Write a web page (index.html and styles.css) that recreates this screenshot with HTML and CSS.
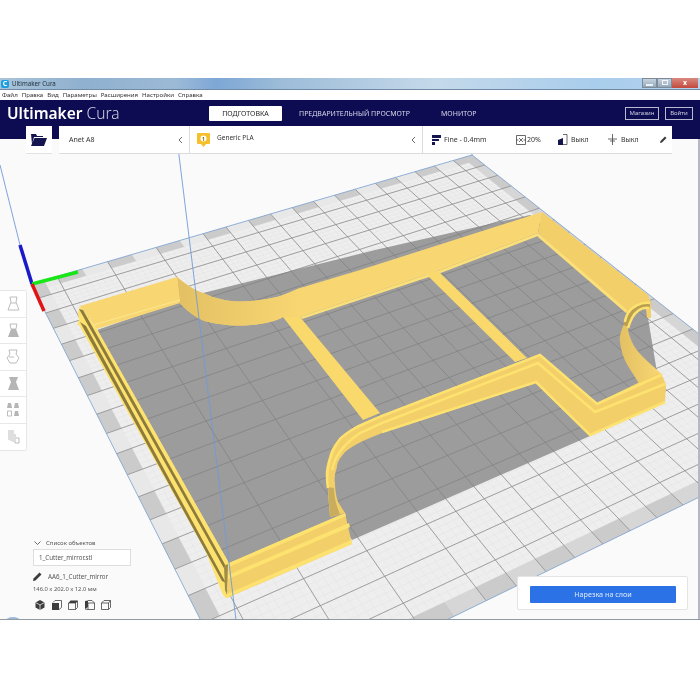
FILE: index.html
```html
<!DOCTYPE html>
<html lang="ru">
<head>
<meta charset="utf-8">
<title>Ultimaker Cura</title>
<link rel="stylesheet" href="styles.css">
</head>
<body>
<div class="window">
  <div class="titlebar">
    <span class="app-icon">C</span>
    <span class="title-text">Ultimaker Cura</span>
    <div class="caption">
      <span class="cap-btn"><i class="cap-min"></i></span>
      <span class="cap-btn"><i class="cap-max"></i></span>
      <span class="cap-close">x</span>
    </div>
  </div>
  <nav class="menubar">
    <span>Файл</span><span>Правка</span><span>Вид</span><span>Параметры</span><span>Расширения</span><span>Настройки</span><span>Справка</span>
  </nav>
  <header class="appbar">
    <div class="logo"><b>Ultimaker</b> <span>Cura</span></div>
    <div class="tabs">
      <span class="tab tab-on">ПОДГОТОВКА</span>
      <span class="tab tab-long">ПРЕДВАРИТЕЛЬНЫЙ ПРОСМОТР</span>
      <span class="tab">МОНИТОР</span>
    </div>
    <div class="account">
      <span class="acc-btn acc-shop">Магазин</span>
      <span class="acc-btn acc-login">Войти</span>
    </div>
    <div class="stagebar">
      <div class="open-btn">
        <svg width="16" height="12" viewBox="0 0 16 12"><path class="ic-navy" d="M0 0h5l1 2h6v1H3L1 10zM3.500 4H16l-3 8H0z"/></svg>
      </div>
      <div class="config">
        <div class="cfg cfg-printer"><span>Anet A8</span><svg class="chev" width="5" height="8" viewBox="0 0 5 8"><path class="ic-line" d="M4 1L1 4l3 3"/></svg></div>
        <div class="cfg cfg-material">
          <svg width="13" height="14" viewBox="0 0 13 14"><path class="ic-amber" d="M1 0h11a1 1 0 0 1 1 1v9a1 1 0 0 1-1 1H9l-2.500 3L4 11H1a1 1 0 0 1-1-1V1a1 1 0 0 1 1-1z"/><circle class="ic-white" cx="6.500" cy="5.500" r="3"/><text class="badge-num" x="6.500" y="7.500">1</text></svg>
          <span class="mat-name">Generic PLA</span>
          <svg class="chev" width="5" height="8" viewBox="0 0 5 8"><path class="ic-line" d="M4 1L1 4l3 3"/></svg>
        </div>
        <div class="cfg cfg-print">
          <span class="item item-fine"><svg width="9" height="10" viewBox="0 0 9 10"><path class="ic-navy" d="M0 0h9v3H0zM0 4h7v2H0zM0 7h3v3H0z"/></svg>Fine - 0.4mm</span>
          <span class="item item-infill"><svg width="10" height="10" viewBox="0 0 10 10"><path class="ic-line" d="M.5.5h9v9h-9zM3 3l4 4M7 3L3 7M.5 5h2M7.500 5h2"/></svg>20%</span>
          <span class="item item-sup"><svg width="10" height="11" viewBox="0 0 10 11"><path class="ic-navy" d="M0 11V6l5-2v7z"/><path class="ic-line" d="M5 .5h4v10H5"/></svg>Выкл</span>
          <span class="item item-adh"><svg width="9" height="11" viewBox="0 0 9 11"><path class="ic-line" d="M4.500 0v11M0 5h9M2 7h5"/></svg>Выкл</span>
          <svg class="pencil" width="7" height="7" viewBox="0 0 7 7"><path class="ic-dark" d="M0 7l.5-2L5 .5 6.500 2 2 6.500z"/></svg>
        </div>
      </div>
    </div>
  </header>
  <main class="stage">
    <svg class="scene" id="scene" width="698" height="481" viewBox="0 139 698 481">
      <defs>
        <linearGradient id="arcfade" gradientUnits="userSpaceOnUse" x1="177" y1="0" x2="300" y2="0">
          <stop offset="0" class="stop-a"/>
          <stop offset="1" class="stop-b"/>
        </linearGradient>
        <linearGradient id="arcright" gradientUnits="userSpaceOnUse" x1="620" y1="0" x2="660" y2="0">
          <stop offset="0" class="stop-a"/>
          <stop offset="1" class="stop-b"/>
        </linearGradient>
      </defs>
      <g id="plate"></g>
      <path class="floor" d="M97 330L203 293L375 250L530 215L645 300L657 372L663 380L590 436L352 540L345 530L240 575L228 562Z"/>
      <g id="floorgrid"></g>

      <!-- back wall with the curved corner -->
      <path class="wall-top" d="M177 277C185 284 194 290 203 293C222 302 240 303 260 300C280 298 290 292 300 288L360 270L542 212L538 233L438 271L300 317L283 317C272 324 245 327 227 325C212 323 205 322 198 318C190 313 184 308 180 303Z"/>
      <path class="arc-face" d="M177 277C185 284 194 290 203 293C222 302 240 303 260 300C280 298 290 292 300 288L300 317L283 317C272 324 245 327 227 325C212 323 205 322 198 318C190 313 184 308 180 303Z"/>
      <path class="wall-light" d="M300 317L438 271L538 233L538 236L438 274L302 319Z"/>

      <!-- cross bars -->
      <path class="bar" d="M283 317L300 317L380 413L363 420Z"/>
      <path class="bar" d="M426 274L438 271L527 358L515 362Z"/>

      <!-- left block and stepped left wall -->
      <path class="wall-top" d="M80 306L177 277L180 303L97 329Z"/>
      <path class="ridge-thin" d="M93 325L180 300"/>
      <path class="stripe" d="M80 306L97 329L229 563L227 598L226 598L223 595L205 550L79 325L77 325L79 320L78 312Z"/>
      <path class="step-dark" d="M79 309L83 310L228 570L225 570Z"/>
      <path class="step-dark" d="M80 322L86 326L226 583L222 581Z"/>
      <path class="corner-dark" d="M224 566L228 564L227 595L225 590Z"/>

      <!-- front wall -->
      <path class="wall-tan" d="M229 563L345 513L352 544L227 598Z"/>
      <path class="stripe" d="M229 563L345 513L346 516L229 567Z"/>
      <path class="stripe" d="M228 575L349 523L350 527L228 579Z"/>
      <path class="stripe" d="M227 594L351 540L352 544L226 598Z"/>

      <!-- right wall and its curved corner -->
      <path class="wall-tan" d="M542 212L648 295L651 303L651 318L647 318L646 309L635 308L627 313L538 233Z"/>
      <path class="wall-light" d="M538 233L627 310L626 313L538 237Z"/>
      <path class="arc-right" d="M625 322C621 330 619 337 620 342C621 350 623 358 628 366L640 385L663 375C655 368 648 362 643 357C638 352 634 347 632 342C630 337 628 333 628 328Z"/>
      <path class="ring-under" d="M650 305C640 304 633 309 630 315C628 319 627 323 626 326"/>
      <path class="ridge" d="M650 303C640 302 632 307 628 313C626 317 625 320 625 322"/>
      <path class="ridge" d="M649 308C641 307 636 311 632 318C630 322 629 325 628 328"/>

      <!-- lower Z wall -->
      <path class="wall-tan" d="M382 415L540 354L597 403L658 373L663 377L666 385L665 403L590 436L536 383L382 433C365 440 358 442 345 452C340 458 337 462 337 467C335 473 334 478 335 483C335 490 336 496 338 502L345 513L330 517C329 505 328 495 328 487C326 480 325 475 326 470C327 462 329 458 330 453C332 447 336 442 340 438C346 433 352 428 358 425Z"/>
      <path class="arc-shadow" d="M328 487L330 517L340 514C336 505 334 496 334 488Z"/>
      <path class="ridge" d="M328 488C325 472 330 452 340 439C348 431 358 426 382 416L540 355L597 404L661 375"/>
      <path class="ridge" d="M332 470C335 455 345 443 360 433L382 423L538 363L595 412L665 384"/>
      <path class="ridge" d="M382 432L536 382L590 435L665 402"/>

      <!-- build volume and axes -->
      <path class="edge" d="M177 139L236 620M472 139L472 155"/>
      <path class="edge" d="M0 165L20 245"/>
      <path class="axis-b" d="M20 245L32 284"/>
      <path class="axis-g" d="M32 284L78 272"/>
      <path class="axis-r" d="M32 284L44 311"/>
    </svg>

    <div class="tools">
      <span class="tool"><svg width="13" height="15" viewBox="0 0 13 15"><path class="ic-tool" d="M3 1h7l-1 5 3 8H1l3-8zM4 7h5"/></svg></span>
      <span class="tool"><svg width="13" height="15" viewBox="0 0 13 15"><path class="ic-fill" d="M1 14l3-8h5l3 8z"/><path class="ic-tool" d="M3 1h7l-1 5H4z"/></svg></span>
      <span class="tool"><svg width="14" height="15" viewBox="0 0 14 15"><path class="ic-tool" d="M3 1h8l-1 4 3 4-3 5H4L1 9l3-4zM3 8h5"/></svg></span>
      <span class="tool"><svg width="13" height="15" viewBox="0 0 13 15"><path class="ic-fill" d="M2 1h9l-2 5 3 8H1l3-8z"/></svg></span>
      <span class="tool"><svg width="14" height="15" viewBox="0 0 14 15"><path class="ic-fill" d="M1 6l1-5h3l1 5zM8 6l1-5h3l1 5zM8 14l1-5h3l1 5z"/><path class="ic-tool" d="M1.500 9h4v5h-4z"/></svg></span>
      <span class="tool"><svg width="13" height="15" viewBox="0 0 13 15"><path class="ic-tool" d="M2 1v10M4 1v11M6 1v12M8 5v9h4V9H9"/></svg></span>
    </div>

    <section class="objects">
      <div class="obj-head"><svg width="7" height="5" viewBox="0 0 7 5"><path class="ic-line" d="M.5.500l3 3 3-3"/></svg>Список объектов</div>
      <div class="obj-file">1_Cutter_mirror.stl</div>
      <div class="obj-name"><svg width="9" height="9" viewBox="0 0 9 9"><path class="ic-dark" d="M0 9l.5-2.500L6.500.5 8.500 2.500l-6 6z"/></svg>AA6_1_Cutter_mirror</div>
      <div class="obj-size">146.0 x 202.0 x 12.0 мм</div>
      <div class="views">
        <svg width="10" height="10" viewBox="0 0 10 10"><path class="ic-dark" d="M5 0l4.500 2.500v5L5 10 .5 7.500v-5z"/><path class="ic-wline" d="M.5 2.500L5 5l4.500-2.500M5 5v5"/></svg>
        <svg width="10" height="10" viewBox="0 0 10 10"><path class="ic-dark" d="M0 3h7v7H0z"/><path class="ic-line" d="M1 2.500L3 .5h6.500v7l-2.500 2"/></svg>
        <svg width="10" height="10" viewBox="0 0 10 10"><path class="ic-dark" d="M2.500 .5H10L8 3H.5z"/><path class="ic-line" d="M.5 3h7v6.500H.5zM7.500 9.500l2-2V1"/></svg>
        <svg width="10" height="10" viewBox="0 0 10 10"><path class="ic-dark" d="M0 1l3-.5V7L0 9z"/><path class="ic-line" d="M3 3h6.500v6.500H3zM0 9l3 .5M3 .5h4L9.500 3"/></svg>
        <svg width="10" height="10" viewBox="0 0 10 10"><path class="ic-line" d="M.5 3h7v6.500H.5zM.5 3l2.500-2.500h6.500v7l-2 2M7.500 3l2-2.500"/></svg>
      </div>
    </section>

    <div class="slice"><span class="slice-btn">Нарезка на слои</span></div>
    <span class="start-orb"></span>
  </main>
</div>
<script src="app.js"></script>
</body>
</html>
```

FILE: styles.css
```css
* { box-sizing: border-box; }
html, body { margin: 0; background: #fff; }
body { padding-top: 78px; height: 700px; overflow: hidden; font-family: "Noto Sans", sans-serif; }

.window {
  width: 700px; height: 542px; display: flex; flex-direction: column;
  border-bottom: 1px solid #8f9aa3; filter: blur(.35px);
}

/* title bar */
.titlebar {
  height: 12px; flex: none; display: flex; align-items: center; position: relative;
  background: linear-gradient(90deg, #a9c4da 0, #8fb0cf 12%, #9cbad6 25%, #7ea7d6 31%, #9cbcd8 40%, #c5d9ea 62%, #a9cdec 85%, #b4d3ee 100%);
  border-bottom: 1px solid #6f8aa6;
}
.app-icon {
  width: 8px; height: 8px; margin-left: 1px; border-radius: 2px; background: #1c9fe0; color: #fff;
  font: 700 7px/8px "Noto Sans", sans-serif; text-align: center;
}
.title-text { margin-left: 3px; font: 6.200px/12px "Noto Sans", sans-serif; color: #20303c; }
.caption { margin-left: auto; margin-right: 2px; display: flex; height: 10px; margin-top: -2px; }
.cap-btn { width: 15px; border: 1px solid #7d8a98; background: linear-gradient(#c6d3df, #94a8bb); display: flex; align-items: center; justify-content: center; }
.cap-min { width: 7px; height: 2px; background: #eef2f5; margin-top: 4px; }
.cap-max { width: 6px; height: 5px; border: 1px solid #f3f5f7; }
.cap-close { width: 26px; background: linear-gradient(#d98a80, #c2493c); color: #fff; font: 700 7px/9px "Noto Sans", sans-serif; text-align: center; }

/* menu */
.menubar { height: 10px; flex: none; display: flex; gap: 4px; padding-left: 2px; background: #fff; font: 6.100px/10px "Noto Sans", sans-serif; color: #333; }

/* app bar */
.appbar { height: 39px; flex: none; position: relative; z-index: 2; display: flex; background: #0d0b52; color: #fff; }
.logo { margin: 3px 0 0 7px; width: 201px; font-size: 15.500px; line-height: 21px; white-space: nowrap; }
.logo b { font-weight: 600; }
.logo span { font-weight: 300; color: #cfd0e4; }
.tabs { display: flex; align-items: flex-start; margin-top: 6px; font-size: 7px; }
.tab { height: 15px; line-height: 15px; color: #d9d9ea; white-space: nowrap; }
.tab-on { width: 73px; margin-left: 1px; background: #fff; color: #222; text-align: center; border-radius: 1px; }
.tab-long { margin-left: 17px; width: 142px; }
.account { margin-left: auto; margin-right: 7px; margin-top: 7px; display: flex; gap: 6px; font-size: 6px; }
.acc-btn { height: 13px; line-height: 11px; border: 1px solid #b9bacf; color: #d0d1e2; text-align: center; }
.acc-shop { width: 34px; }
.acc-login { width: 28px; }

/* floating config bar */
.stagebar { position: absolute; left: 26px; top: 26px; display: flex; gap: 7px; height: 27px; color: #333; }
.open-btn { width: 26px; background: #fff; display: flex; align-items: center; justify-content: center; box-shadow: 0 1px 0 #e2e2e2; }
.config { width: 613px; background: #fff; display: flex; box-shadow: 0 1px 0 #dcdcdc; font-size: 7px; }
.cfg { display: flex; align-items: center; height: 27px; }
.cfg-printer { width: 131px; padding: 0 6px 0 10px; justify-content: space-between; border-right: 1px solid #dcdcdc; }
.cfg-material { width: 233px; padding: 0 6px 0 7px; border-right: 1px solid #dcdcdc; }
.mat-name { margin: -5px 0 0 7px; font-size: 6.500px; }
.cfg-material .chev { margin-left: auto; }
.cfg-print { flex: 1; padding-left: 9px; position: relative; }
.item { display: flex; align-items: center; gap: 3px; white-space: nowrap; flex: none; }
.item-fine { width: 84px; }
.item-infill { width: 42px; gap: 1px; }
.item-sup { width: 50px; }
.item-adh { width: 52px; gap: 4px; }
.badge-num { font: 700 5px "Noto Sans", sans-serif; text-anchor: middle; fill: #7a6410; }

/* 3D view */
.stage { flex: 1; position: relative; background: #fafafa; overflow: hidden; border-right: 2px solid #b7b7c4; }
.scene { display: block; }
.plate-base { fill: #eeeeee; }
.minor { stroke: #e0e0e0; stroke-width: .4; }
.major { stroke: #8b8b8b; stroke-width: .8; }
.band-a { fill: #cbcbcb; }
.band-b { fill: #e8e8e8; }
.band-c { fill: #d6d6d6; }
.plate-edge { fill: none; stroke: #7a9fd0; stroke-width: .8; }
.floor { fill: #9c9c9c; }
.floor-line { stroke: #838383; stroke-width: .8; }
.wall-top { fill: #f8d672; }
.wall-tan { fill: #f3cf6a; }
.wall-light { fill: #fbe07a; }
.arc-face { fill: url(#arcfade); }
.arc-right { fill: url(#arcright); }
.arc-shadow { fill: #c9ad5c; }
.stop-a { stop-color: #e3c063; }
.stop-b { stop-color: #f8d672; }
.bar { fill: #fad96c; }
.stripe { fill: #fde270; }
.ridge { fill: none; stroke: #fde270; stroke-width: 2.500; }
.ridge-thin { fill: none; stroke: #fde890; stroke-width: 1; }
.ring-under { fill: none; stroke: #b89f52; stroke-width: 5; }
.step-dark { fill: #8d7b3c; }
.corner-dark { fill: #a08c45; }
.edge { fill: none; stroke: #6f9bd8; stroke-width: .9; }
.axis-b, .axis-g, .axis-r { fill: none; stroke-width: 3.500; }
.axis-b { stroke: #1a1ac8; }
.axis-g { stroke: #19e619; }
.axis-r { stroke: #e01414; }

/* left tools */
.tools { position: absolute; left: 0; top: 151px; width: 27px; display: flex; flex-direction: column; background: #fff; border: 1px solid #e6e6e6; border-left: 0; border-radius: 0 2px 2px 0; }
.tool { height: 26.500px; display: flex; align-items: center; justify-content: center; border-bottom: 1px solid #e8e8e8; }
.tool:last-child { border-bottom: 0; }

/* object list */
.objects { position: absolute; left: 33px; top: 399px; width: 98px; color: #555; font-size: 6.200px; }
.obj-head { display: flex; align-items: center; gap: 5px; height: 10px; margin-left: 1px; font-size: 6px; }
.obj-file { height: 17px; margin-top: 1px; line-height: 15px; padding-left: 5px; background: #fff; border: 1px solid #dedede; }
.obj-name { display: flex; align-items: center; gap: 6px; height: 14px; margin-top: 3px; }
.obj-size { margin-top: 1px; font-size: 5.800px; line-height: 10px; }
.views { display: flex; gap: 6.500px; margin-top: 6px; margin-left: 2px; }

/* slice */
.slice { position: absolute; left: 517px; top: 437px; width: 171px; height: 34px; padding: 9px 11px 0 12px; background: #fff; border: 1px solid #e4e4e4; border-radius: 2px; }
.slice-btn { display: block; height: 17px; line-height: 17px; background: #2a72e5; color: #dfe9fb; text-align: center; font-size: 7.200px; border-radius: 1px; }
.start-orb { position: absolute; left: 5px; bottom: -8px; width: 16px; height: 10px; border-radius: 50%; background: #9dbbd6; }

/* icon paints */
.ic-navy { fill: #14144f; }
.ic-dark { fill: #3c3c3c; }
.ic-amber { fill: #f5c02c; }
.ic-white { fill: #fff; }
.ic-line { fill: none; stroke: #444; stroke-width: .8; }
.ic-wline { fill: none; stroke: #fff; stroke-width: .7; }
.ic-tool { fill: none; stroke: #bdbdbd; stroke-width: 1; }
.ic-fill { fill: #b5b5b5; }
```

FILE: app.js
```javascript
// Draws the perspective build plate: one homography from the plate square to the screen.
(function () {
  var NS = 'http://www.w3.org/2000/svg';
  var A = [31, 284], B = [472, 155], C = [827, 435], D = [249, 716];
  var N = 20;

  var dx1 = B[0] - C[0], dx2 = D[0] - C[0], sx = A[0] - B[0] + C[0] - D[0];
  var dy1 = B[1] - C[1], dy2 = D[1] - C[1], sy = A[1] - B[1] + C[1] - D[1];
  var det = dx1 * dy2 - dx2 * dy1;
  var g = (sx * dy2 - dx2 * sy) / det;
  var h = (dx1 * sy - sx * dy1) / det;
  var a = B[0] - A[0] + g * B[0], b = D[0] - A[0] + h * D[0], c = A[0];
  var d = B[1] - A[1] + g * B[1], e = D[1] - A[1] + h * D[1], f = A[1];

  function pt(u, v) {
    var w = g * u + h * v + 1;
    return [(a * u + b * v + c) / w, (d * u + e * v + f) / w];
  }
  function el(parent, name, cls, attrs) {
    var n = document.createElementNS(NS, name);
    if (cls) n.setAttribute('class', cls);
    for (var k in attrs) n.setAttribute(k, attrs[k]);
    parent.appendChild(n);
    return n;
  }
  function poly(parent, cls, pts) {
    el(parent, 'polygon', cls, { points: pts.map(function (p) { return p[0].toFixed(1) + ',' + p[1].toFixed(1); }).join(' ') });
  }
  function line(parent, cls, u1, v1, u2, v2) {
    var p = pt(u1, v1), q = pt(u2, v2);
    el(parent, 'line', cls, { x1: p[0].toFixed(1), y1: p[1].toFixed(1), x2: q[0].toFixed(1), y2: q[1].toFixed(1) });
  }
  function cell(parent, cls, u1, v1, u2, v2) {
    poly(parent, cls, [pt(u1, v1), pt(u2, v1), pt(u2, v2), pt(u1, v2)]);
  }

  var plate = document.getElementById('plate');
  var floorGrid = document.getElementById('floorgrid');
  var t = 1 / N, band = 0.5 * t, i;

  poly(plate, 'plate-base', [A, B, C, D]);
  for (i = 1; i < N * 4; i++) {
    line(plate, 'minor', i / (N * 4), 0, i / (N * 4), 1);
    line(plate, 'minor', 0, i / (N * 4), 1, i / (N * 4));
  }
  for (i = 0; i < N; i++) {
    cell(plate, i % 2 ? 'band-a' : 'band-b', i * t, 0, (i + 1) * t, band);
    cell(plate, i % 2 ? 'band-b' : 'band-a', 0, i * t, band, (i + 1) * t);
    cell(plate, i % 2 ? 'band-a' : 'band-c', i * t, 1 - band, (i + 1) * t, 1);
    cell(plate, i % 2 ? 'band-c' : 'band-a', 1 - band, i * t, 1, (i + 1) * t);
  }
  for (i = 1; i < N; i++) {
    // Near the left corner the reference only keeps every other line of this family.
    var keepU = !(i < 8 && i % 2 === 0);
    if (keepU) {
      line(plate, 'major', i * t, 0, i * t, 1);
      line(floorGrid, 'floor-line', i * t, 0, i * t, 1);
    }
    line(plate, 'major', 0, i * t, 1, i * t);
    line(floorGrid, 'floor-line', 0, i * t, 1, i * t);
  }
  poly(plate, 'plate-edge', [A, B, C, D]);

  // Floor grid lines show only inside the shaded floor.
  var defs = document.querySelector('#scene defs');
  var clip = el(defs, 'clipPath', '', { id: 'floorclip' });
  el(clip, 'path', '', { d: document.querySelector('.floor').getAttribute('d') });
  floorGrid.setAttribute('clip-path', 'url(#floorclip)');
})();
```
